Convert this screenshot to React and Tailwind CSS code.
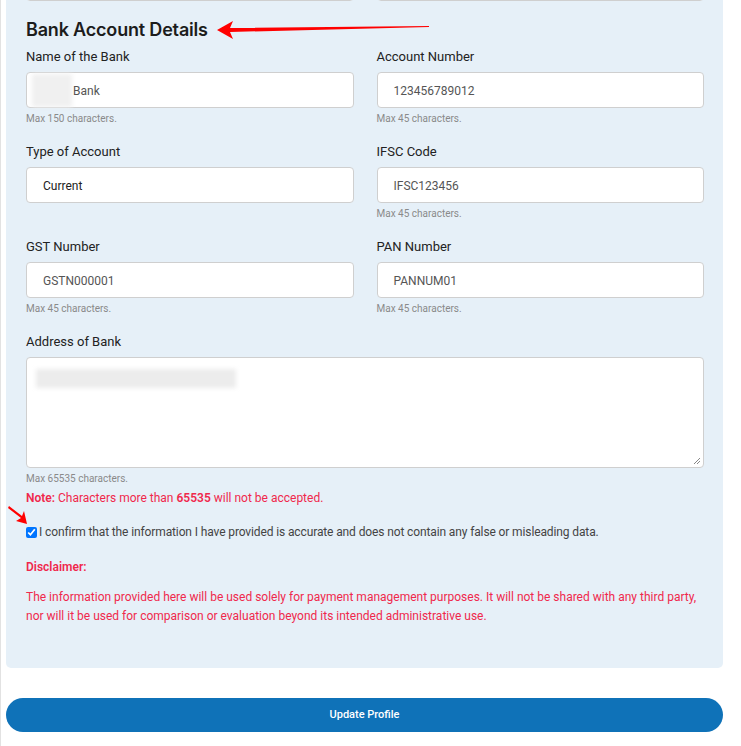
import React from "react";

const red = "text-[#f0284c]";

function Field({label, value, helper, blur}) {
  return (
    <div className="flex flex-col">
      <label className="h-[20px] leading-[20px] text-[13px] text-[#222]">{label}</label>
      <div className="mt-[5px] h-[36px] bg-white border border-[#cfcfcf] rounded-[4px] flex items-center px-[16px] pt-[2px] relative">
        {blur && <div className="absolute left-[5px] top-[1px] w-[40px] h-[33px] bg-[#f0f0f0] blur-[2px]"></div>}
        <span className={"text-[12px] text-[#555] relative " + (blur ? "ml-[30px]" : "")}>{value}</span>
      </div>
      {helper && <span className="mt-[5px] h-[12px] leading-[12px] text-[10px] text-[#8a8a8a]">{helper}</span>}
    </div>
  );
}

export default function App() {
  return (
    <div className="h-[746px] overflow-hidden bg-white border-l border-[#e2e2e2] relative font-['Roboto',sans-serif]">
      <div className="mx-[5px] w-[717px] -mt-[60px] bg-[#e6f0f8] rounded-[5px] pl-[20px] pr-[19px] pt-[23px] pb-[42px]">
        <div className="grid grid-cols-2 gap-x-[23px]">
          <div className="h-[38px] bg-white border border-[#cfcfcf] rounded-[4px]"></div>
          <div className="h-[38px] bg-white border border-[#cfcfcf] rounded-[4px]"></div>
        </div>

        <h2 className="mt-[17px] h-[24px] leading-[24px] text-[18px] font-semibold text-[#1c1c1c] font-['Inter',sans-serif] tracking-[-0.01em]">
          Bank Account Details
        </h2>

        <div className="mt-[5px] grid grid-cols-2 gap-x-[23px] gap-y-[17px]">
          <Field label="Name of the Bank" value="Bank" helper="Max 150 characters." blur />
          <Field label="Account Number" value="123456789012" helper="Max 45 characters." />
          <Field label="Type of Account" value={<span className="text-[#222]">Current</span>} />
          <Field label="IFSC Code" value="IFSC123456" helper="Max 45 characters." />
          <Field label="GST Number" value="GSTN000001" helper="Max 45 characters." />
          <Field label="PAN Number" value="PANNUM01" helper="Max 45 characters." />
        </div>

        <div className="mt-[17px] flex flex-col">
          <label className="h-[20px] leading-[20px] text-[13px] text-[#222]">Address of Bank</label>
          <div className="mt-[5px] h-[111px] bg-white border border-[#cfcfcf] rounded-[4px] relative">
            <div className="absolute left-[9px] top-[11px] w-[200px] h-[19px] bg-[#ececec] blur-[2px]"></div>
            <svg className="absolute right-[2px] bottom-[2px]" width="8" height="8" viewBox="0 0 8 8">
              <path d="M7 1 L1 7 M7 4 L4 7" stroke="#888" strokeWidth="1" />
            </svg>
          </div>
          <span className="mt-[5px] h-[12px] leading-[12px] text-[10px] text-[#8a8a8a]">Max 65535 characters.</span>
          <p className={"mt-[5px] h-[16px] leading-[16px] text-[12px] " + red}>
            <b className="font-semibold">Note:</b> Characters more than <b className="font-semibold">65535</b> will not be accepted.
          </p>
        </div>

        <label className="mt-[18px] flex items-center h-[16px] text-[12px] text-[#444] tracking-[-0.01em]">
          <input type="checkbox" defaultChecked className="w-[11px] h-[11px] m-0 mr-[2px] accent-[#0075ff]" />
          I confirm that the information I have provided is accurate and does not contain any false or misleading data.
        </label>

        <p className={"mt-[19px] h-[16px] leading-[16px] text-[12px] font-semibold " + red}>Disclaimer:</p>

        <p className={"mt-[13px] leading-[19px] text-[12px] " + red}>
          <span className="block whitespace-nowrap">
            The information provided here will be used solely for payment management purposes. It will not be shared with any third party,
          </span>
          <span className="block whitespace-nowrap">
            nor will it be used for comparison or evaluation beyond its intended administrative use.
          </span>
        </p>
      </div>

      <button className="mt-[30px] mx-[5px] w-[717px] h-[34px] rounded-full bg-[#0f72b8] text-white text-[11px] font-medium">
        Update Profile
      </button>

      <svg className="absolute left-[214px] top-[18px]" width="216" height="22" viewBox="0 0 216 22">
        <path d="M2 12 L18 3 L15 10 L214 8 L214 9 L15 14 L18 21 Z" fill="#f00" />
      </svg>
      <svg className="absolute left-[7px] top-[505px]" width="22" height="20" viewBox="0 0 22 20">
        <path d="M1 1 L14 11 L16 6 L19 19 L8 16 L13 13 L0 3 Z" fill="#f00" />
      </svg>
    </div>
  );
}
